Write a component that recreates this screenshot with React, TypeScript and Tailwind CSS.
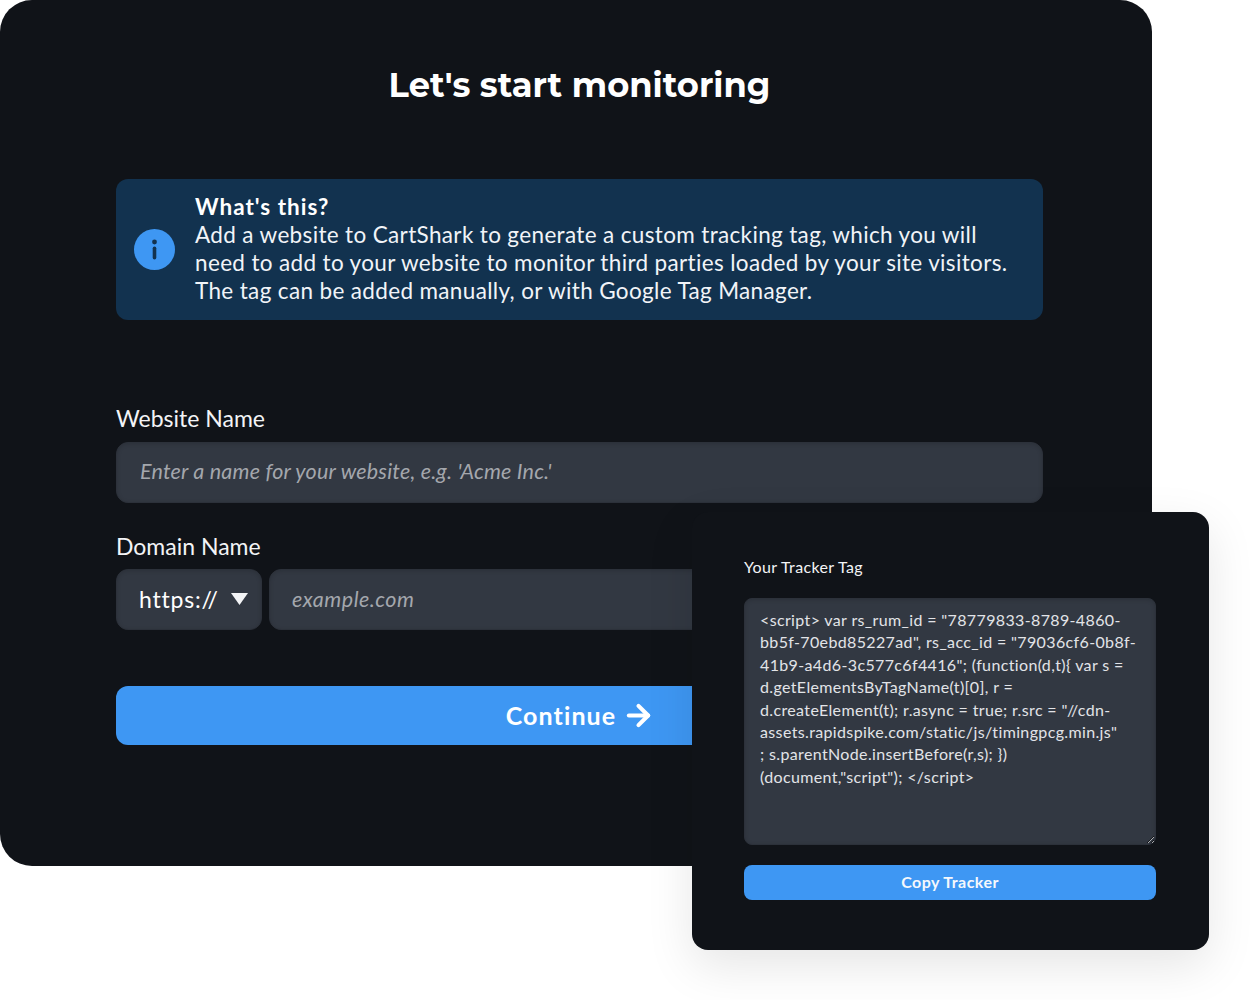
import { ArrowRight } from 'lucide-react';

const body = "font-['Lato','Noto_Sans',sans-serif]";

const trackerTag = `<script> var rs_rum_id = "78779833-8789-4860-
bb5f-70ebd85227ad", rs_acc_id = "79036cf6-0b8f-
41b9-a4d6-3c577c6f4416"; (function(d,t){ var s =
d.getElementsByTagName(t)[0], r =
d.createElement(t); r.async = true; r.src = "//cdn-
assets.rapidspike.com/static/js/timingpcg.min.js"
; s.parentNode.insertBefore(r,s); })
(document,"script"); </script>`;

function InfoIcon() {
  return (
    <svg width="41" height="41" viewBox="0 0 41 41" className="mb-[1px] shrink-0">
      <circle cx="20.5" cy="20.5" r="20.5" fill="#3e97f3" />
      <circle cx="20.5" cy="13" r="2.4" fill="#12324f" />
      <rect x="18.7" y="17.5" width="3.6" height="13" rx="1.8" fill="#12324f" />
    </svg>
  );
}

function Tracker() {
  return (
    <div className="absolute left-[692px] top-[512px] w-[517px] h-[438px] rounded-[16px] bg-[#101318] px-[52px] pt-[46px] shadow-[0_16px_48px_rgba(0,0,0,0.1)]">
      <label className="block text-[16px] leading-[18px] tracking-[0.35px] text-[#f3f4f6]">Your Tracker Tag</label>
      <textarea
        readOnly
        wrap="off"
        defaultValue={trackerTag}
        className={`mt-[22px] block w-[412px] h-[247px] resize rounded-[8px] border border-[#2c313a] bg-[#323842] pl-[15px] pr-[4px] pt-[10px] text-[16px] leading-[22.4px] tracking-[0.36px] text-[#e2e4e8] overflow-hidden outline-none shadow-[inset_0_1px_4px_rgba(0,0,0,0.15)] ${body}`}
      />
      <button className="mt-[20px] h-[35px] w-[412px] rounded-[8px] bg-[#3e97f3] pb-[2px] text-[16px] font-bold tracking-[0.45px] text-[#f5f8fc]">
        Copy Tracker
      </button>
    </div>
  );
}

export default function App() {
  return (
    <div className={`relative h-[1000px] w-[1257px] overflow-hidden bg-white ${body}`}>
      <div className="h-[866px] w-[1152px] rounded-[32px] bg-[#101318] pl-[116px] pr-[109px] pt-[62px]">
        <h1 className="text-center font-['Montserrat','Inter',sans-serif] text-[33.7px] font-bold leading-[46px] text-white">
          Let's start monitoring
        </h1>

        <div className="mt-[71px] flex h-[141px] items-center gap-[20px] rounded-[12px] bg-[#12324f] pl-[18px]">
          <InfoIcon />
          <div className="mb-[2px] whitespace-nowrap text-[22.5px] leading-[28px] tracking-[0.35px] text-[#f1f4f8]">
            <p className="font-bold tracking-[1px] text-white">What's this?</p>
            <p>Add a website to CartShark to generate a custom tracking tag, which you will</p>
            <p>need to add to your website to monitor third parties loaded by your site visitors.</p>
            <p>The tag can be added manually, or with Google Tag Manager.</p>
          </div>
        </div>

        <label className="mt-[83px] block text-[23px] leading-[30px] text-[#f3f4f6]">Website Name</label>
        <input
          placeholder="Enter a name for your website, e.g. 'Acme Inc.'"
          className="mt-[9px] block h-[61px] w-full rounded-[12px] border border-[#2c313a] bg-[#323842] px-[23px] pb-[3px] text-[21.5px] italic tracking-[0.2px] outline-none shadow-[inset_0_1px_4px_rgba(0,0,0,0.15)] placeholder:text-[#a4a7ad]"
        />

        <label className="mt-[28px] block text-[23px] leading-[30px] text-[#f3f4f6]">Domain Name</label>
        <div className="mt-[8px] flex gap-[7px]">
          <div className="flex h-[61px] w-[146px] items-center justify-between rounded-[12px] border border-[#2c313a] bg-[#323842] pb-[1px] pl-[22px] pr-[13px] text-[23px] tracking-[0.8px] text-white shadow-[inset_0_1px_4px_rgba(0,0,0,0.15)]">
            https://
            <svg width="17" height="12" viewBox="0 0 17 12">
              <path d="M0 0h17L8.5 12z" fill="#f3f4f6" />
            </svg>
          </div>
          <input
            placeholder="example.com"
            className="block h-[61px] min-w-0 flex-1 rounded-[12px] border border-[#2c313a] bg-[#323842] px-[22px] pb-[1px] text-[21.5px] italic tracking-[0.5px] outline-none shadow-[inset_0_1px_4px_rgba(0,0,0,0.15)] placeholder:text-[#a4a7ad]"
          />
        </div>

        <button className="mt-[56px] flex h-[59px] w-full items-center justify-center gap-[6px] rounded-[12px] bg-[#3e97f3] pl-[2px] text-[25px] font-bold tracking-[1.1px] text-white">
          Continue
          <ArrowRight size={33} strokeWidth={3} />
        </button>
      </div>

      <Tracker />
    </div>
  );
}
